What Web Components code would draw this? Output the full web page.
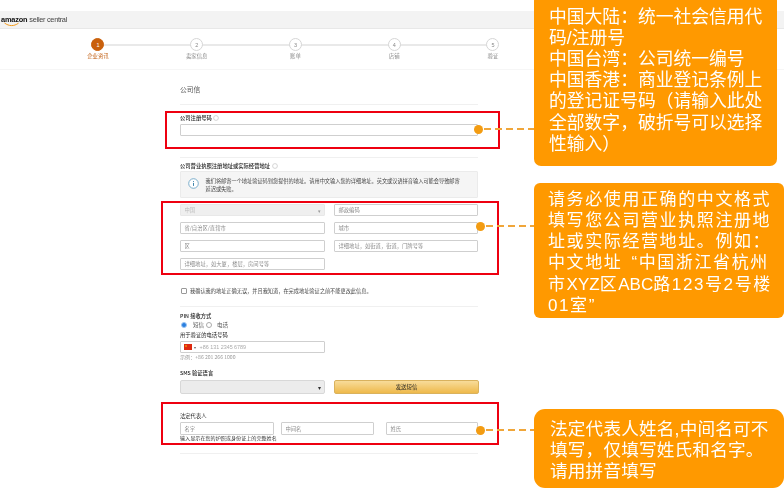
<!DOCTYPE html>
<html lang="zh-Hans">
<head>
<meta charset="utf-8">
<title>seller central</title>
<style>
html, body { margin: 0; background: #fff; }
body { font-family: "Noto Sans CJK SC", "Liberation Sans", sans-serif; }
</style>
</head>
<body>
<reg-page>
  <seller-header></seller-header>
  <seller-stepper>
    <seller-step num="1" active>企业资讯</seller-step>
    <seller-step num="2">卖家信息</seller-step>
    <seller-step num="3">账单</seller-step>
    <seller-step num="4">店铺</seller-step>
    <seller-step num="5" last>验证</seller-step>
  </seller-stepper>
  <reg-form>
    <form-title style="margin-top:13px">公司信</form-title>
    <form-rule style="margin-top:9px"></form-rule>

    <mark-box style="margin-top:9px;--t:-3px;--l:-15px;--r:-22px;--b:-13px;--dot-y:15px;--dot-x:298px;--dash:51px">
      <form-label hint>公司注册号码</form-label>
      <form-input style="margin-top:2px"></form-input>
    </mark-box>

    <form-rule style="margin-top:21px"></form-rule>
    <form-label hint style="margin-top:4px">公司营业执照注册地址或实际经营地址</form-label>
    <info-box style="margin-top:1px">我们将邮寄一个地址验证码到您提供的地址。请用中文输入您的详细地址。英文或汉语拼音输入可能会导致邮寄<br>延迟或失败。</info-box>

    <mark-box style="margin-top:6px;--t:-3px;--l:-19px;--r:-21px;--b:-5px;--dot-y:22px;--dot-x:300px;--dash:49px">
      <form-grid>
        <form-input disabled caret placeholder="中国"></form-input>
        <form-input placeholder="邮政编码"></form-input>
        <form-input placeholder="省/自治区/直辖市"></form-input>
        <form-input placeholder="城市"></form-input>
        <form-input placeholder="区"></form-input>
        <form-input placeholder="详细地址&#xFF0C;如街道&#xFF0C;街道&#xFF0C;门牌号等"></form-input>
        <form-input placeholder="详细地址&#xFF0C;如大厦&#xFF0C;楼层&#xFF0C;房间号等"></form-input>
      </form-grid>
    </mark-box>

    <form-check style="margin-top:17px">我确认我的地址正确无误&#xFF0C;并且我知道&#xFF0C;在完成地址验证之前不能更改此信息。</form-check>
    <form-rule style="margin-top:11px"></form-rule>

    <form-label style="margin-top:5px">PIN 接收方式</form-label>
    <form-radios style="margin-top:1px"></form-radios>
    <form-label plain style="margin-top:2px">用于验证的电话号码</form-label>
    <phone-input style="margin-top:2px"></phone-input>
    <form-note>示例&#xFF1A;+86 201 266 1000</form-note>
    <form-label style="margin-top:8px">SMS 验证语言</form-label>
    <sms-row style="margin-top:3px"></sms-row>

    <mark-box style="margin-top:18px;--t:-10px;--l:-19px;--r:-21px;--b:-4px;--dot-y:18px;--dot-x:300px;--dash:49px">
      <form-label plain>法定代表人</form-label>
      <name-row style="margin-top:2px">
        <form-input tall placeholder="名字"></form-input>
        <form-input tall placeholder="中间名"></form-input>
        <form-input tall placeholder="姓氏"></form-input>
      </name-row>
      <form-note dark>输入显示在您的护照或身份证上的完整姓名</form-note>
    </mark-box>
    <form-rule style="margin-top:12px"></form-rule>
  </reg-form>

  <note-callout style="top:-6px;left:534px;width:243px;height:172px;--pad-t:12.6px;--pad-l:15px;--fs:17.8px;--ls:0px;--lh:21.2px;--rad:7px">中国大陆&#xFF1A;统一社会信用代<br>码/注册号<br>中国台湾&#xFF1A;公司统一编号<br>中国香港&#xFF1A;商业登记条例上<br>的登记证号码&#xFF08;请输入此处<br>全部数字&#xFF0C;破折号可以选择<br>性输入&#xFF09;</note-callout>
  <note-callout style="top:183px;left:534px;width:250px;height:135px;--pad-t:5.5px;--pad-l:14px;--fs:17px;--ls:1.6px;--lh:21.3px;--rad:6px">请务必使用正确的中文格式<br>填写您公司营业执照注册地<br>址或实际经营地址。例如&#xFF1A;<br>中文地址<span style="margin-left:9px">“</span>中国浙江省杭州<br>市<span style="letter-spacing:0">XYZ</span>区<span style="letter-spacing:0">ABC</span>路123号2号楼<br>01室”</note-callout>
  <note-callout style="top:409px;left:534px;width:250px;height:79px;--pad-t:9.6px;--pad-l:16px;--fs:17.6px;--ls:0.2px;--lh:21.3px;--rad:11px">法定代表人姓名,中间名可不<br>填写&#xFF0C;仅填写姓氏和名字。<br>请用拼音填写</note-callout>
</reg-page>

<script>
function shadow(el, html) {
    el.attachShadow({mode: 'open'})
    el.shadowRoot.innerHTML = html
}

const cjk = `"Noto Sans CJK SC", "Liberation Sans", sans-serif`

class RegPage extends HTMLElement {
    constructor() {
        super()
        shadow(this, `
        <style>
        :host { display: block; position: relative; width: 784px; height: 489px; overflow: hidden; background: #fff; font-family: ${cjk}; }
        .blurred { filter: blur(0.45px); height: 489px; }
        </style>
        <div class="blurred"><slot></slot></div>
        <slot name="x"></slot>
        `)
    }
}

class SellerHeader extends HTMLElement {
    constructor() {
        super()
        shadow(this, `
        <style>
        :host { display: flex; align-items: center; gap: 2px; box-sizing: border-box; height: 18px; margin-top: 11px; padding-left: 1px; background: #f3f3f3; border-bottom: 1px solid #e8e8e8; font-family: "Liberation Sans", sans-serif; font-size: 7.4px; color: #333; }
        .az { position: relative; font-weight: bold; color: #111; letter-spacing: -0.2px; }
        svg { position: absolute; left: 3px; top: 7px; }
        .sc { font-weight: normal; letter-spacing: -0.3px; color: #444; }
        </style>
        <span class="az">amazon<svg width="16" height="5" viewBox="0 0 16 5"><path d="M0.5 1 C5 4.4 10 4.4 14.5 1.2" fill="none" stroke="#f49b1a" stroke-width="1"/></svg></span>
        <span class="sc">seller central</span>
        `)
    }
}

class SellerStepper extends HTMLElement {
    constructor() {
        super()
        shadow(this, `
        <style>
        :host { display: grid; grid-template-columns: repeat(5, 98.75px); box-sizing: border-box; height: 41px; padding: 9px 0 0 48.6px; border-bottom: 1px solid #f6f6f6; }
        </style>
        <slot></slot>
        `)
    }
}

class SellerStep extends HTMLElement {
    constructor() {
        super()
        const on = this.hasAttribute('active')
        shadow(this, `
        <style>
        :host { display: flex; flex-direction: column; align-items: center; position: relative; font-size: 5.4px; line-height: 8px; color: ${on ? '#c4651c' : '#888'}; }
        .c { position: relative; z-index: 1; box-sizing: border-box; width: 13px; height: 13px; border-radius: 50%; display: flex; align-items: center; justify-content: center; font: 5.5px "Liberation Sans", sans-serif; background: ${on ? '#c9600c' : '#fff'}; border: 1px solid ${on ? '#c9600c' : '#d5d5d5'}; color: ${on ? '#fff' : '#888'}; }
        .line { position: absolute; left: 50%; top: 5.5px; width: 98.75px; height: 2px; background: #e9e9e9; display: ${this.hasAttribute('last') ? 'none' : 'block'}; }
        .t { margin-top: 1px; }
        </style>
        <span class="line"></span>
        <span class="c">${this.getAttribute('num')}</span>
        <span class="t"><slot></slot></span>
        `)
    }
}

class RegForm extends HTMLElement {
    constructor() {
        super()
        shadow(this, `
        <style>
        :host { display: flex; flex-direction: column; margin-left: 180px; width: 298px; }
        </style>
        <slot></slot>
        `)
    }
}

class FormTitle extends HTMLElement {
    constructor() {
        super()
        shadow(this, `<style>:host { display: block; font-size: 6.8px; line-height: 12px; color: #555; }</style><slot></slot>`)
    }
}

class FormRule extends HTMLElement {
    constructor() {
        super()
        shadow(this, `<style>:host { display: block; height: 1px; background: #f0f0f0; }</style>`)
    }
}

class FormLabel extends HTMLElement {
    constructor() {
        super()
        const hint = this.hasAttribute('hint')
            ? `<svg width="6" height="6" viewBox="0 0 6 6"><circle cx="3" cy="3" r="2.4" fill="none" stroke="#c4c4c4" stroke-width=".7"/></svg>` : ''
        const weight = this.hasAttribute('plain') ? 400 : 500
        shadow(this, `
        <style>
        :host { display: flex; align-items: center; gap: 1.5px; height: 8px; font-size: 5.3px; line-height: 8px; font-weight: ${weight}; color: #222; white-space: nowrap; }
        </style>
        <span><slot></slot></span>${hint}
        `)
    }
}

class FormInput extends HTMLElement {
    constructor() {
        super()
        const off = this.hasAttribute('disabled')
        const ph = this.getAttribute('placeholder') || ''
        const h = this.hasAttribute('tall') ? 13 : 12
        shadow(this, `
        <style>
        :host { display: flex; align-items: center; justify-content: space-between; box-sizing: border-box; height: ${h}px; padding: 0 3px 0 3.5px; background: ${off ? '#efefef' : '#fff'}; border: 1px solid ${off ? '#e8e8e8' : '#cfcfcf'}; border-radius: 1px; font-size: 5.3px; color: ${off ? '#bbb' : '#8c8c8c'}; white-space: nowrap; overflow: hidden; }
        .car { font-size: 5px; color: #999; }
        </style>
        <span>${ph}</span>${this.hasAttribute('caret') ? '<span class="car">▾</span>' : ''}
        `)
    }
}

class FormGrid extends HTMLElement {
    constructor() {
        super()
        shadow(this, `<style>:host { display: grid; grid-template-columns: 145px 144px; column-gap: 9px; row-gap: 6px; }</style><slot></slot>`)
    }
}

class InfoBox extends HTMLElement {
    constructor() {
        super()
        shadow(this, `
        <style>
        :host { display: flex; box-sizing: border-box; height: 27px; padding: 5px 0 0 7px; gap: 6.5px; background: #f5f5f5; border: 1px solid #ebebeb; border-radius: 1px; font-size: 5.2px; line-height: 8px; color: #444; white-space: nowrap; overflow: hidden; }
        svg { flex: none; margin-top: 1px; }
        </style>
        <svg width="11" height="11" viewBox="0 0 11 11"><circle cx="5.5" cy="5.5" r="4.8" fill="#fff" stroke="#6ea6c6" stroke-width=".9"/><path d="M5.5 3v.9M5.5 4.9v3" stroke="#3f86ad" stroke-width="1" fill="none"/></svg>
        <div><slot></slot></div>
        `)
    }
}

class MarkBox extends HTMLElement {
    constructor() {
        super()
        shadow(this, `
        <style>
        :host { display: block; position: relative; }
        .frame { position: absolute; top: var(--t); left: var(--l); right: var(--r); bottom: var(--b); border: 2px solid #ee0010; pointer-events: none; }
        .dot { position: absolute; z-index: 2; top: var(--dot-y); left: var(--dot-x); width: 9px; height: 9px; margin: -4.5px 0 0 -4.5px; border-radius: 50%; background: #f39c12; }
        .dash { position: absolute; z-index: 2; top: var(--dot-y); left: calc(var(--dot-x) + 6px); width: var(--dash); height: 1.6px; margin-top: -0.8px; background: repeating-linear-gradient(90deg, #f0a63a 0 7px, transparent 7px 11px); }
        </style>
        <span class="frame"></span>
        <slot></slot>
        <span class="dot"></span><span class="dash"></span>
        `)
    }
}

class FormCheck extends HTMLElement {
    constructor() {
        super()
        shadow(this, `
        <style>
        :host { display: flex; align-items: center; gap: 3px; height: 8px; padding-left: 1px; font-size: 5.2px; line-height: 8px; color: #444; white-space: nowrap; }
        i { width: 4px; height: 4px; border: 1px solid #999; border-radius: 1px; }
        </style>
        <i></i><span><slot></slot></span>
        `)
    }
}

class FormRadios extends HTMLElement {
    constructor() {
        super()
        shadow(this, `
        <style>
        :host { display: flex; align-items: center; height: 8px; padding-left: 1px; font-size: 5.5px; line-height: 8px; color: #555; }
        i { box-sizing: border-box; width: 6px; height: 6px; border-radius: 50%; border: 1px solid #aaa; background: #fff; }
        i.on { border: 1px solid #9cc5f2; background: #2a7fe0; }
        span { margin: 0 2px 0 6px; }
        span + i + span { margin-left: 5px; }
        </style>
        <i class="on"></i><span>短信</span><i></i><span>电话</span>
        `)
    }
}

class PhoneInput extends HTMLElement {
    constructor() {
        super()
        shadow(this, `
        <style>
        :host { display: flex; align-items: center; box-sizing: border-box; width: 145px; height: 12px; padding-left: 3px; background: #fff; border: 1px solid #cfcfcf; border-radius: 1px; font: 5.4px "Liberation Sans", sans-serif; color: #aaa; }
        svg { flex: none; }
        .car { margin: 0 4px 0 1.5px; font-size: 4px; color: #666; }
        </style>
        <svg width="8" height="6" viewBox="0 0 8 6"><rect width="8" height="6" fill="#de2910"/><circle cx="2" cy="2" r=".8" fill="#ffde00"/></svg>
        <span class="car">▾</span>
        <span>+86 131 2345 6789</span>
        `)
    }
}

class FormNote extends HTMLElement {
    constructor() {
        super()
        const dark = this.hasAttribute('dark')
        shadow(this, `<style>:host { display: block; height: ${dark ? 6 : 8}px; font-size: 5.1px; line-height: ${dark ? 6 : 8}px; color: ${dark ? '#333' : '#999'}; white-space: nowrap; }</style><slot></slot>`)
    }
}

class SmsRow extends HTMLElement {
    constructor() {
        super()
        shadow(this, `
        <style>
        :host { display: grid; grid-template-columns: 145px 145px; column-gap: 9px; height: 14px; }
        .sel { display: flex; align-items: center; justify-content: flex-end; box-sizing: border-box; padding-right: 3px; background: #ececec; border: 1px solid #d8d8d8; border-radius: 2px; font-size: 6px; color: #333; }
        .btn { display: flex; align-items: center; justify-content: center; box-sizing: border-box; background: linear-gradient(#f8dc9a, #eeb94b); border: 1px solid #d9b25e; border-radius: 2px; font-size: 5.4px; color: #222; }
        </style>
        <div class="sel">▾</div>
        <div class="btn">发送短信</div>
        `)
    }
}

class NameRow extends HTMLElement {
    constructor() {
        super()
        shadow(this, `
        <style>
        :host { display: flex; }
        ::slotted(:nth-child(1)) { width: 94px; margin-right: 7px; }
        ::slotted(:nth-child(2)) { width: 93px; margin-right: 12px; }
        ::slotted(:nth-child(3)) { width: 92px; }
        </style>
        <slot></slot>
        `)
    }
}

class NoteCallout extends HTMLElement {
    constructor() {
        super()
        this.slot = 'x'
        shadow(this, `
        <style>
        :host { display: block; position: absolute; box-sizing: border-box; padding: var(--pad-t) 0 0 var(--pad-l); background: #ff9900; border-radius: var(--rad); color: #fff; font-family: "Liberation Sans", "Noto Sans CJK SC", sans-serif; font-size: var(--fs); letter-spacing: var(--ls); line-height: var(--lh); white-space: nowrap; overflow: hidden; filter: blur(0.3px); }
        </style>
        <slot></slot>
        `)
    }
}

const parts = {
    'reg-page': RegPage, 'seller-header': SellerHeader, 'seller-stepper': SellerStepper,
    'seller-step': SellerStep, 'reg-form': RegForm, 'form-title': FormTitle, 'form-rule': FormRule,
    'form-label': FormLabel, 'form-input': FormInput, 'form-grid': FormGrid, 'info-box': InfoBox,
    'mark-box': MarkBox, 'form-check': FormCheck, 'form-radios': FormRadios, 'phone-input': PhoneInput,
    'form-note': FormNote, 'sms-row': SmsRow, 'name-row': NameRow, 'note-callout': NoteCallout
}
for (const name in parts) {
    window.customElements.define(name, parts[name])
}
</script>
</body>
</html>
